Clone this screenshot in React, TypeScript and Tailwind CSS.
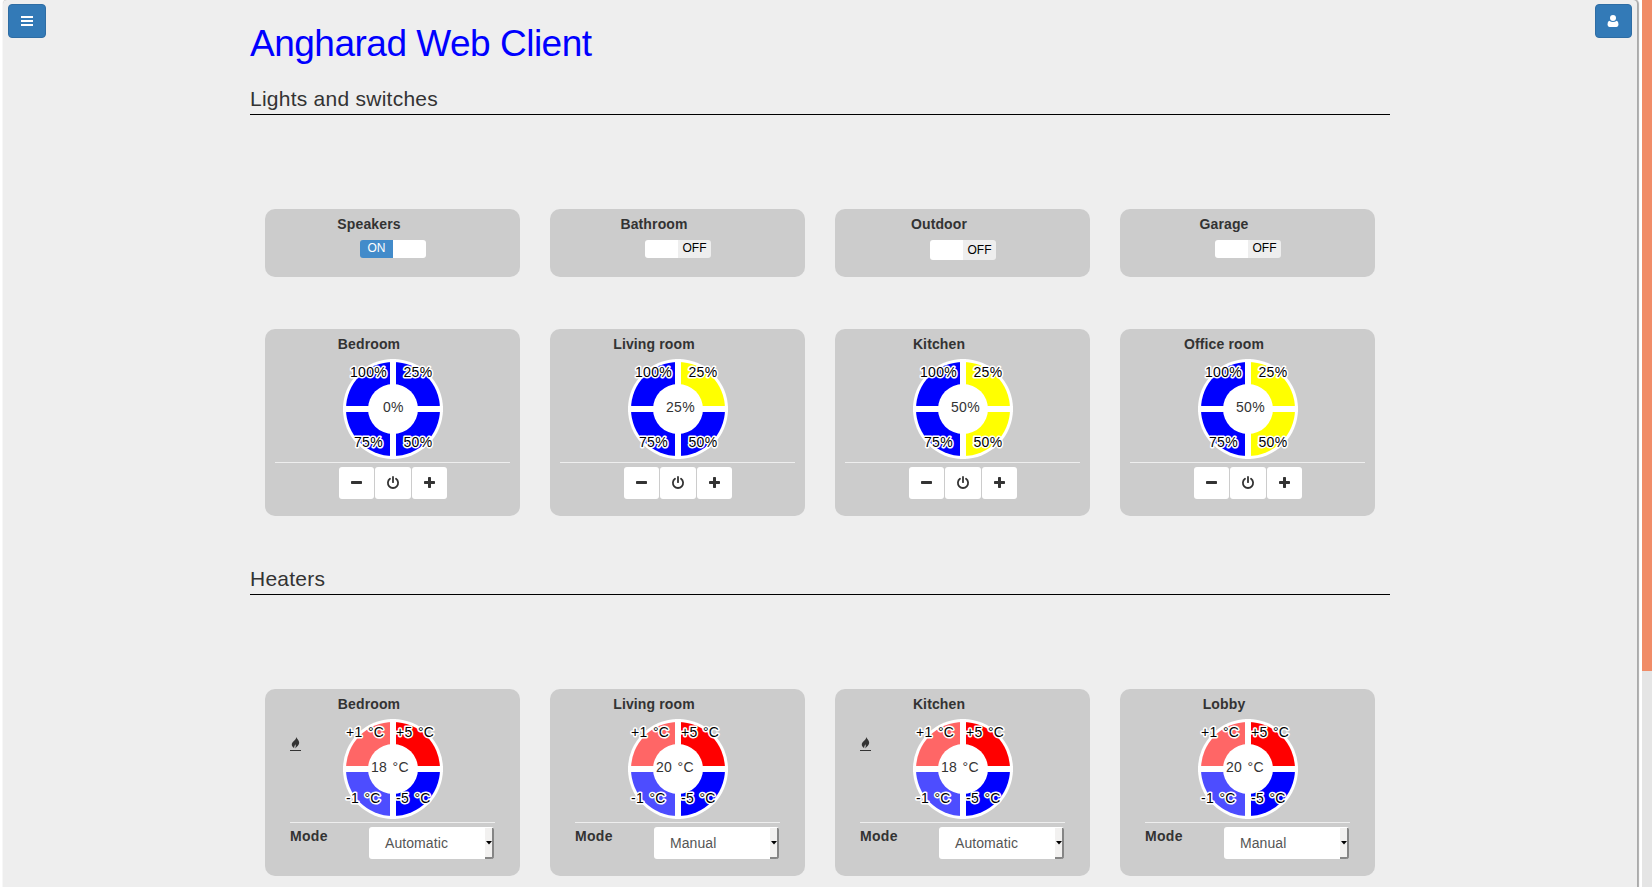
import React from "react";

const SANS = "font-['Liberation_Sans',Arial,sans-serif]";

type Label = { text: string; x: number; y: number };

function Dial({ colors, labels, value }: { colors: [string, string, string, string]; labels: Label[]; value: Label }) {
  return (
    <svg width="110" height="100" viewBox="-55 -50 110 100" className="block overflow-visible text-sm tracking-[0.28px] [word-spacing:1.2px]">
      <circle r="50" fill="#fff" />
      <path d="M0 0V-47A47 47 0 0 1 47 0Z" fill={colors[0]} />
      <path d="M0 0H47A47 47 0 0 1 0 47Z" fill={colors[1]} />
      <path d="M0 0V47A47 47 0 0 1 -47 0Z" fill={colors[2]} />
      <path d="M0 0H-47A47 47 0 0 1 0 -47Z" fill={colors[3]} />
      <rect x="-3" y="-50" width="6" height="100" fill="#fff" />
      <rect x="-50" y="-3" width="100" height="6" fill="#fff" />
      <circle r="25" fill="#fff" />
      {labels.map((l) => (
        <text key={l.text} x={l.x} y={l.y} fill="#000" stroke="#fff" strokeWidth="3" strokeLinejoin="round" paintOrder="stroke">
          {l.text}
        </text>
      ))}
      <text x={value.x} y={value.y} fill="#333">{value.text}</text>
    </svg>
  );
}

function Card({ title, tall, children }: { title: string; tall?: boolean; children: React.ReactNode }) {
  return (
    <div className={`w-[255px] rounded-[10px] bg-[#ccc] ${tall ? "h-[187px]" : "h-[68px]"}`}>
      <div className="w-[208px] pt-[5px] text-center text-sm leading-5 font-bold tracking-[0.13px]">{title}</div>
      {children}
    </div>
  );
}

function SwitchCard({ title, on, large }: { title: string; on?: boolean; large?: boolean }) {
  return (
    <Card title={title}>
      <div className={`mt-1.5 ml-[95px] flex w-[66px] overflow-hidden rounded-[3px] text-center text-xs ${large ? "h-5 leading-5" : "h-[18px] leading-4"}`}>
        <span className={`w-[33px] ${on ? "bg-[#428bca] text-white" : "bg-white"}`}>{on ? "ON" : ""}</span>
        <span className={`w-[33px] ${on ? "bg-white" : "bg-[#eee] text-black"}`}>{on ? "" : "OFF"}</span>
      </div>
    </Card>
  );
}

function DimmerCard({ title, level }: { title: string; level: number }) {
  const c = (n: number) => (level >= n ? "#ff0" : "#00f");
  return (
    <Card title={title} tall>
      <div className="mt-[5px] ml-[73px]">
        <Dial
          colors={[c(25), c(50), c(75), c(100)]}
          labels={[
            { text: "25%", x: 10.5, y: -32 },
            { text: "50%", x: 10.5, y: 38 },
            { text: "75%", x: -39, y: 38 },
            { text: "100%", x: -43, y: -32 },
          ]}
          value={{ text: `${level}%`, x: level ? -12 : -10, y: 3 }}
        />
      </div>
      <div className="mx-2.5 mt-[3px] h-px bg-[#eee]" />
      <div className="mt-1 ml-[74px] flex gap-px text-[#333]">
        <button className="flex h-8 w-[35px] justify-center rounded-[3px] bg-white pt-2.5 pr-px">
          <svg width="12" height="12" viewBox="0 0 12 12" fill="currentColor"><rect x="1" y="4" width="11" height="3" rx="0.7" /></svg>
        </button>
        <button className="flex h-8 w-9 items-center justify-center rounded-[3px] bg-white">
          <svg width="14" height="14" viewBox="0 0 14 14" fill="none" stroke="currentColor" strokeWidth="1.8" strokeLinecap="round">
            <path d="M4 2.8A5.1 5.1 0 1 0 10 2.8M7 0.9V6.2" />
          </svg>
        </button>
        <button className="flex h-8 w-[35px] justify-center rounded-[3px] bg-white pt-2.5 pr-px">
          <svg width="12" height="12" viewBox="0 0 12 12" fill="currentColor">
            <rect x="1" y="4" width="11" height="3" rx="0.7" />
            <rect x="5" y="0" width="3" height="11" rx="0.7" />
          </svg>
        </button>
      </div>
    </Card>
  );
}

function HeaterCard({ title, temp, mode, heating }: { title: string; temp: number; mode: string; heating?: boolean }) {
  return (
    <Card title={title} tall>
      <div className="mt-[5px] flex">
        <div className="w-[73px] pt-[18px] pl-[25px]">
          {heating && (
            <svg width="11" height="15" viewBox="0 0 11 15" fill="#333">
              <path d="M6.3 0C6.6 1.6 9.2 3.2 9.2 5.8C9.2 8.3 7 9.2 5.2 11.5C5.6 9.8 5.9 9 5.5 7.2C4.6 8.6 4 9.6 4.2 11.3C2.6 10.2 1.5 8.8 1.8 7.1C2.3 4.5 6 3.4 6.3 0Z" />
              <rect x="0" y="13" width="11" height="1" />
            </svg>
          )}
        </div>
        <Dial
          colors={["#f00", "#00f", "#4d4dff", "#f66"]}
          labels={[
            { text: "+1 °C", x: -47, y: -32 },
            { text: "+5 °C", x: 3, y: -32 },
            { text: "-1 °C", x: -47, y: 34 },
            { text: "-5 °C", x: 3, y: 34 },
          ]}
          value={{ text: `${temp} °C`, x: -22, y: 3 }}
        />
      </div>
      <div className="mt-[3px] mr-[25px] ml-[25px] h-px bg-[#eee]" />
      <div className="mt-1 flex pl-[25px] text-sm">
        <span className="-mt-px w-[79px] leading-5 font-bold tracking-[0.3px]">Mode</span>
        <button className="flex h-8 w-[125px] items-center overflow-hidden rounded-[3px] bg-white pl-4 text-left text-[#555]">
          <span className="flex-1 tracking-[0.08px]">{mode}</span>
          <span className="mt-px flex h-[31px] w-[9px] items-center justify-center border-r-2 border-b-2 border-[#858585] bg-[#f2f1f0]">
            <svg width="6" height="4" viewBox="0 0 6 4"><path d="M0 0H6L3 3.5Z" fill="#000" /></svg>
          </span>
        </button>
      </div>
    </Card>
  );
}

function Section({ title, children }: { title: string; children: React.ReactNode }) {
  return (
    <section>
      <h2 className="h-[30px] border-b border-black text-[21px] leading-[27px] tracking-[0.25px]">{title}</h2>
      {children}
    </section>
  );
}

export default function App() {
  return (
    <div className={`${SANS} flex h-[887px] w-full overflow-hidden bg-white pl-[3px] text-[#333]`}>
      <main className="flex w-[1634px] items-start rounded-t-[4px] bg-[#eee] shadow-[1px_0_1px_1px_#aaa]">
        <button className="mt-1 ml-[5px] flex h-[34px] w-[38px] items-center justify-center rounded-[4px] border border-[#2e6da4] bg-[#337ab7]">
          <svg width="12" height="10" viewBox="0 0 12 10" fill="#fff">
            <rect width="12" height="2" /><rect y="4" width="12" height="2" /><rect y="8" width="12" height="2" />
          </svg>
        </button>
        <div className="ml-[204px] w-[1140px] shrink-0">
          <h1 className="h-[85px] pt-6 text-[37px] leading-10 tracking-[-0.5px] text-[#00f]">Angharad Web Client</h1>
          <Section title="Lights and switches">
            <div className="mt-[94px] flex gap-[30px] px-[15px]">
              <SwitchCard title="Speakers" on />
              <SwitchCard title="Bathroom" />
              <SwitchCard title="Outdoor" large />
              <SwitchCard title="Garage" />
            </div>
            <div className="mt-[52px] flex gap-[30px] px-[15px]">
              <DimmerCard title="Bedroom" level={0} />
              <DimmerCard title="Living room" level={25} />
              <DimmerCard title="Kitchen" level={50} />
              <DimmerCard title="Office room" level={50} />
            </div>
          </Section>
          <div className="h-[49px]" />
          <Section title="Heaters">
            <div className="mt-[94px] flex gap-[30px] px-[15px]">
              <HeaterCard title="Bedroom" temp={18} mode="Automatic" heating />
              <HeaterCard title="Living room" temp={20} mode="Manual" />
              <HeaterCard title="Kitchen" temp={18} mode="Automatic" heating />
              <HeaterCard title="Lobby" temp={20} mode="Manual" />
            </div>
          </Section>
        </div>
        <button className="mt-1 ml-[205px] flex h-[34px] w-[37px] shrink-0 items-center justify-center rounded-[4px] border border-[#2e6da4] bg-[#337ab7] pr-px">
          <svg width="12" height="12" viewBox="0 0 12 12" fill="#fff">
            <circle cx="6" cy="3" r="3" />
            <path d="M2.2 5.8Q6 8.4 9.8 5.8Q11.5 6.6 11.5 9.6Q11.5 12 9.5 12H2.5Q0.5 12 0.5 9.6Q0.5 6.6 2.2 5.8Z" />
          </svg>
        </button>
      </main>
      <div className="ml-[5px] w-2.5 bg-[#e5e5e5]">
        <div className="h-[671px] bg-[#f08c67]" />
      </div>
    </div>
  );
}
